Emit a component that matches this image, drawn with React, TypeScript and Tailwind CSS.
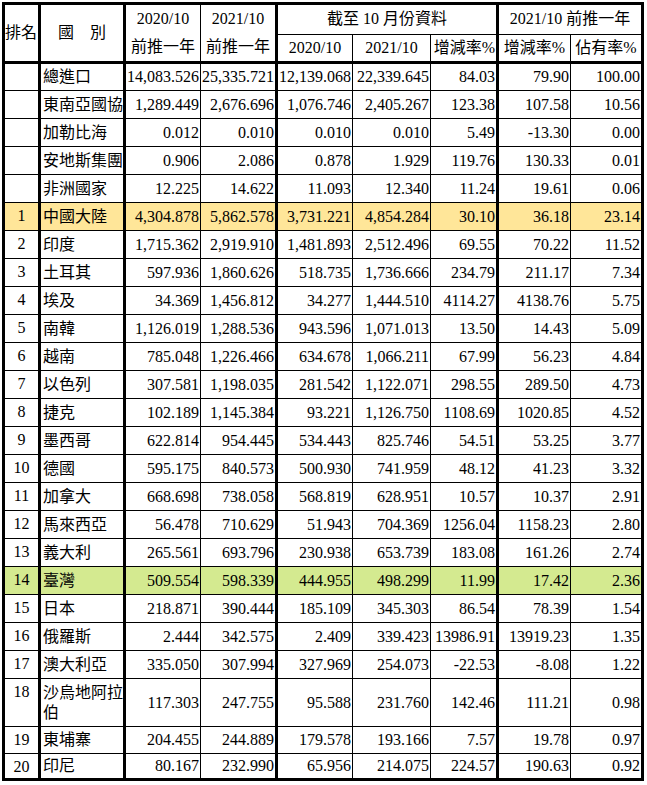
import React from 'react';

type Row = {
  rank: string;
  name: string;
  vals: string[];
  tone?: 'yellow' | 'green';
};

const ROWS: Row[] = [
  { rank: '', name: '總進口', vals: ['14,083.526', '25,335.721', '12,139.068', '22,339.645', '84.03', '79.90', '100.00'] },
  { rank: '', name: '東南亞國協', vals: ['1,289.449', '2,676.696', '1,076.746', '2,405.267', '123.38', '107.58', '10.56'] },
  { rank: '', name: '加勒比海', vals: ['0.012', '0.010', '0.010', '0.010', '5.49', '-13.30', '0.00'] },
  { rank: '', name: '安地斯集團', vals: ['0.906', '2.086', '0.878', '1.929', '119.76', '130.33', '0.01'] },
  { rank: '', name: '非洲國家', vals: ['12.225', '14.622', '11.093', '12.340', '11.24', '19.61', '0.06'] },
  { rank: '1', name: '中國大陸', vals: ['4,304.878', '5,862.578', '3,731.221', '4,854.284', '30.10', '36.18', '23.14'], tone: 'yellow' },
  { rank: '2', name: '印度', vals: ['1,715.362', '2,919.910', '1,481.893', '2,512.496', '69.55', '70.22', '11.52'] },
  { rank: '3', name: '土耳其', vals: ['597.936', '1,860.626', '518.735', '1,736.666', '234.79', '211.17', '7.34'] },
  { rank: '4', name: '埃及', vals: ['34.369', '1,456.812', '34.277', '1,444.510', '4114.27', '4138.76', '5.75'] },
  { rank: '5', name: '南韓', vals: ['1,126.019', '1,288.536', '943.596', '1,071.013', '13.50', '14.43', '5.09'] },
  { rank: '6', name: '越南', vals: ['785.048', '1,226.466', '634.678', '1,066.211', '67.99', '56.23', '4.84'] },
  { rank: '7', name: '以色列', vals: ['307.581', '1,198.035', '281.542', '1,122.071', '298.55', '289.50', '4.73'] },
  { rank: '8', name: '捷克', vals: ['102.189', '1,145.384', '93.221', '1,126.750', '1108.69', '1020.85', '4.52'] },
  { rank: '9', name: '墨西哥', vals: ['622.814', '954.445', '534.443', '825.746', '54.51', '53.25', '3.77'] },
  { rank: '10', name: '德國', vals: ['595.175', '840.573', '500.930', '741.959', '48.12', '41.23', '3.32'] },
  { rank: '11', name: '加拿大', vals: ['668.698', '738.058', '568.819', '628.951', '10.57', '10.37', '2.91'] },
  { rank: '12', name: '馬來西亞', vals: ['56.478', '710.629', '51.943', '704.369', '1256.04', '1158.23', '2.80'] },
  { rank: '13', name: '義大利', vals: ['265.561', '693.796', '230.938', '653.739', '183.08', '161.26', '2.74'] },
  { rank: '14', name: '臺灣', vals: ['509.554', '598.339', '444.955', '498.299', '11.99', '17.42', '2.36'], tone: 'green' },
  { rank: '15', name: '日本', vals: ['218.871', '390.444', '185.109', '345.303', '86.54', '78.39', '1.54'] },
  { rank: '16', name: '俄羅斯', vals: ['2.444', '342.575', '2.409', '339.423', '13986.91', '13919.23', '1.35'] },
  { rank: '17', name: '澳大利亞', vals: ['335.050', '307.994', '327.969', '254.073', '-22.53', '-8.08', '1.22'] },
  { rank: '18', name: '沙烏地阿拉伯', vals: ['117.303', '247.755', '95.588', '231.760', '142.46', '111.21', '0.98'] },
  { rank: '19', name: '東埔寨', vals: ['204.455', '244.889', '179.578', '193.166', '7.57', '19.78', '0.97'] },
  { rank: '20', name: '印尼', vals: ['80.167', '232.990', '65.956', '214.075', '224.57', '190.63', '0.92'] },
];

// left border per value column (cols 3..9)
const VAL_BORDERS = [
  'border-l-[3px]',
  'border-l',
  'border-l-[3px]',
  'border-l',
  'border-l',
  'border-l-[3px]',
  'border-l',
];

export default function App() {
  return (
    <div className="bg-white w-[647px] h-[785px] pt-[2px] pl-[2px]">
      <table
        className="table-fixed border-collapse border-[3px] border-black text-black text-[16px] leading-[20px]"
        style={{ fontFamily: '"Liberation Serif", "Noto Sans CJK TC", serif', width: 642 }}
      >
        <colgroup>
          <col style={{ width: 36 }} />
          <col style={{ width: 85 }} />
          <col style={{ width: 76 }} />
          <col style={{ width: 76 }} />
          <col style={{ width: 76 }} />
          <col style={{ width: 78 }} />
          <col style={{ width: 67 }} />
          <col style={{ width: 73 }} />
          <col style={{ width: 72 }} />
        </colgroup>
        <thead>
          <tr className="h-[30px]">
            <th rowSpan={2} className="font-normal text-left align-middle p-0 whitespace-nowrap border-b-[3px] border-black">
              排名
            </th>
            <th rowSpan={2} className="font-normal text-center align-middle p-0 border-l-[3px] border-b-[3px] border-black">
              國&nbsp;&nbsp;&nbsp;&nbsp;別
            </th>
            <th rowSpan={2} className="font-normal text-center align-middle p-0 border-l-[3px] border-b-[3px] border-black">
              <div className="leading-[28px]">2020/10</div>
              <div className="leading-[28px]">前推一年</div>
            </th>
            <th rowSpan={2} className="font-normal text-center align-middle p-0 border-l border-b-[3px] border-black">
              <div className="leading-[28px]">2021/10</div>
              <div className="leading-[28px]">前推一年</div>
            </th>
            <th colSpan={3} className="font-normal text-center align-middle p-0 border-l-[3px] border-b border-black">
              截至 10 月份資料
            </th>
            <th colSpan={2} className="font-normal text-center align-middle p-0 border-l-[3px] border-b border-black">
              2021/10 前推一年
            </th>
          </tr>
          <tr className="h-[28px]">
            <th className="font-normal text-center p-0 border-l-[3px] border-b-[3px] border-black">2020/10</th>
            <th className="font-normal text-center p-0 border-l border-b-[3px] border-black">2021/10</th>
            <th className="font-normal text-right p-0 pr-px whitespace-nowrap border-l border-b-[3px] border-black">增減率%</th>
            <th className="font-normal text-center p-0 whitespace-nowrap border-l-[3px] border-b-[3px] border-black">增減率%</th>
            <th className="font-normal text-center p-0 whitespace-nowrap border-l border-b-[3px] border-black">佔有率%</th>
          </tr>
        </thead>
        <tbody>
          {ROWS.map((r) => {
            const bg =
              r.tone === 'yellow' ? 'bg-[#ffe699]' : r.tone === 'green' ? 'bg-[#d4ea90]' : 'bg-white';
            const tall = r.name.length > 5;
            const h = tall ? 'h-[48px]' : r.rank === '19' ? 'h-[27px]' : r.rank === '20' ? 'h-[26px]' : 'h-[28px]';
            return (
              <tr key={r.name} className={`${h} ${bg}`}>
                <td className="p-0 pt-[3px] text-center align-top border-b border-black">{r.rank}</td>
                <td className="p-0 pl-[2px] text-left align-middle border-l-[3px] border-b border-black">
                  {r.name}
                </td>
                {r.vals.map((v, i) => (
                  <td
                    key={i}
                    className={`p-0 pr-px text-right align-middle whitespace-nowrap border-b border-black ${VAL_BORDERS[i]}`}
                  >
                    {v}
                  </td>
                ))}
              </tr>
            );
          })}
        </tbody>
      </table>
    </div>
  );
}
